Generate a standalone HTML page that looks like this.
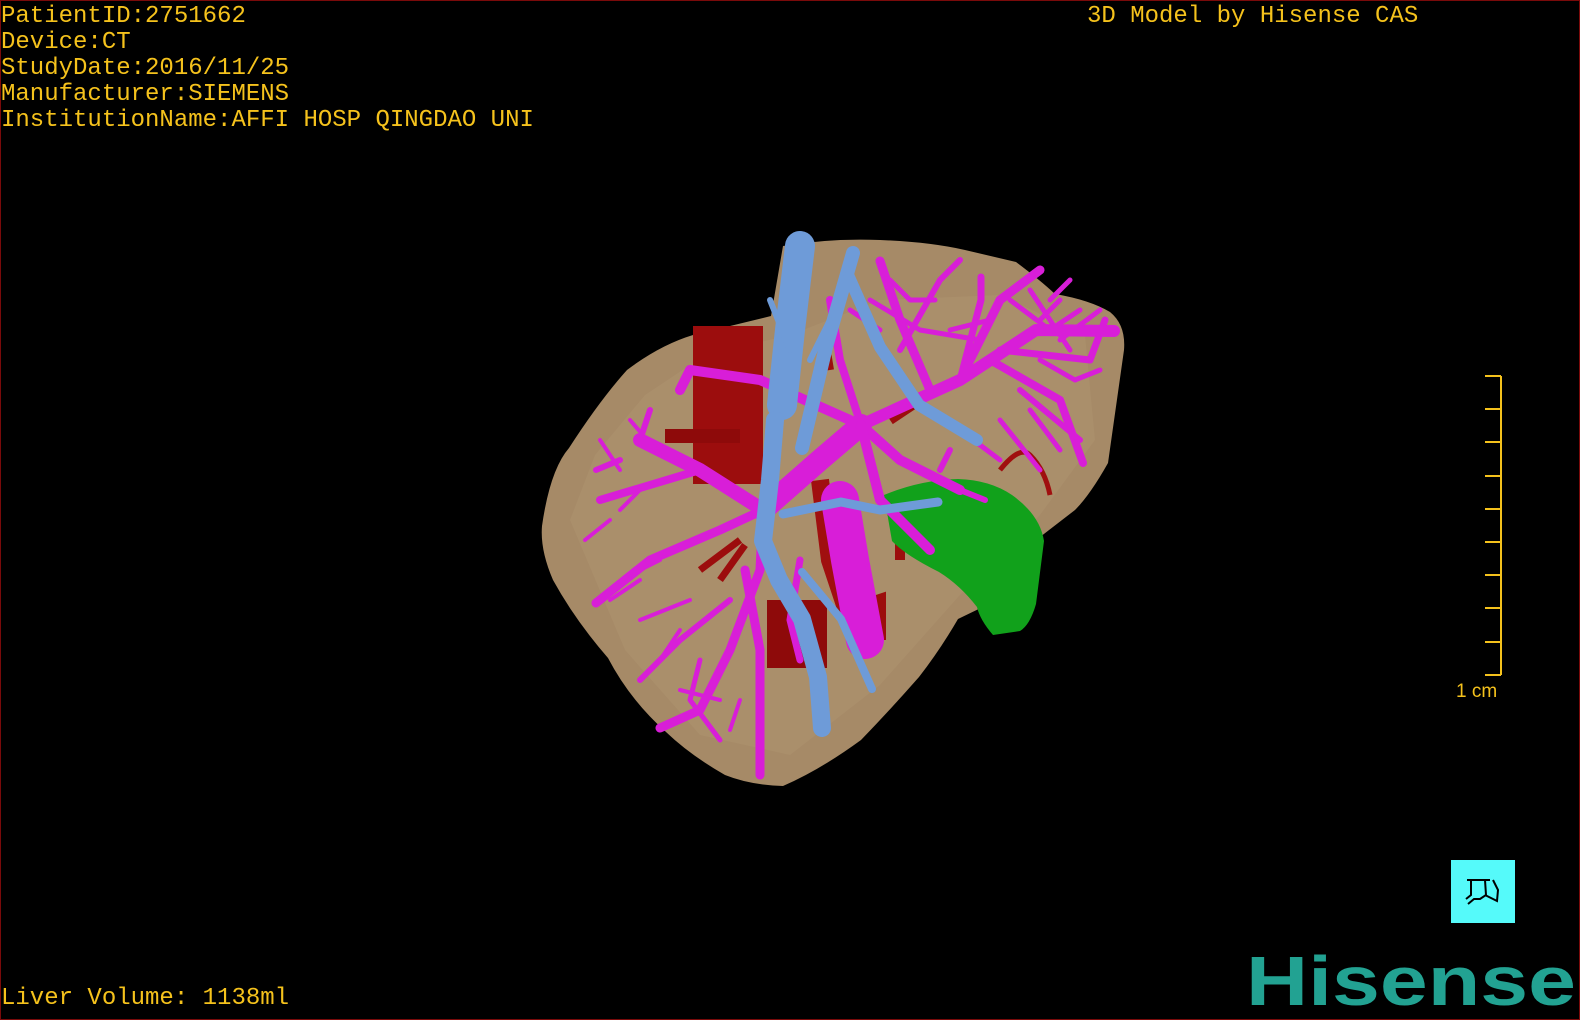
<!DOCTYPE html>
<html><head><meta charset="utf-8"><style>
html,body{margin:0;padding:0;background:#000;}
body{width:1580px;height:1020px;position:relative;overflow:hidden;}
.frame{position:absolute;left:0;top:0;width:1578px;height:1018px;border:1px solid #7a0a0a;}
.t{position:absolute;font-family:"Liberation Mono",monospace;font-size:24px;color:#f5c21c;white-space:pre;line-height:26px;}
</style></head><body>
<div class="frame"></div>
<div class="t" style="left:1px;top:4px;">PatientID:2751662
Device:CT
StudyDate:2016/11/25
Manufacturer:SIEMENS
InstitutionName:AFFI HOSP QINGDAO UNI</div>
<div class="t" style="left:1087px;top:4px;">3D Model by Hisense CAS</div>
<div class="t" style="left:1px;top:986px;">Liver Volume: 1138ml</div>

<svg width="1580" height="1020" style="position:absolute;left:0;top:0">
<!-- liver -->
<path d="M542,526 Q550,470 569,448 Q600,400 627,370 Q660,345 693,335 L771,316 L783,246 Q830,238 880,240 Q930,242 965,250 L1016,262 Q1040,280 1055,294 Q1090,300 1110,312 Q1126,325 1124,350 L1108,463 Q1090,495 1075,510 L1040,537 Q1010,575 989,604 L958,619 Q940,650 919,677 Q890,710 861,740 Q820,770 783,786 Q750,785 725,775 Q690,755 666,732 Q630,700 608,658 Q575,620 553,580 Q540,550 542,526 Z" fill="#a68a67"/>
<path d="M570,520 L595,455 L645,395 L705,355 L790,335 L880,300 L1000,295 L1085,335 L1095,440 L1040,515 L960,595 L880,685 L790,755 L700,735 L625,650 Z" fill="#b09470" opacity="0.45"/>
<!-- red -->
<rect x="693" y="326" width="70" height="158" fill="#9c0d0d"/>
<rect x="767" y="600" width="60" height="68" fill="#8e0a0a"/>
<path d="M665,436 L740,436" stroke="#8e0a0a" stroke-width="14"/>
<path d="M820,480 L830,560 L850,620" stroke="#a00f0f" stroke-width="18" fill="none"/>
<path d="M700,570 L740,540 M720,580 L745,545" stroke="#9c0d0d" stroke-width="7" fill="none"/>
<path d="M850,610 L880,600 L880,640" stroke="#9c0d0d" stroke-width="12" fill="none"/>
<path d="M890,420 L920,400 M900,540 L900,560" stroke="#9c0d0d" stroke-width="10" fill="none"/>
<path d="M1000,470 Q1020,445 1030,455 Q1045,470 1050,495" stroke="#a00f0f" stroke-width="5" fill="none"/>
<path d="M825,340 L830,370" stroke="#9c0d0d" stroke-width="8"/>
<!-- green -->
<path d="M884,495 Q920,480 958,479 Q990,480 1012,495 Q1040,515 1044,541 L1036,604 Q1030,625 1020,631 L993,635 Q980,620 977,607 Q960,585 939,572 Q905,555 892,541 Z" fill="#11a11b"/>
<!-- magenta -->
<g stroke="#d81ed8" fill="none" stroke-linecap="round" stroke-linejoin="round">
<path d="M840,500 L850,560 L865,640" stroke-width="38"/>
<path d="M763,510 L700,470 L640,440" stroke-width="14"/>
<path d="M700,470 L600,500" stroke-width="8"/>
<path d="M640,440 L650,410 M620,460 L596,470" stroke-width="6"/>
<path d="M763,510 L720,530 L650,560 L596,603" stroke-width="9"/>
<path d="M763,510 L760,570 L730,650 L700,710 L660,728" stroke-width="9"/>
<path d="M745,570 L760,650 L760,775" stroke-width="9"/>
<path d="M730,600 L680,640 L640,680" stroke-width="6"/>
<path d="M700,660 L690,700 L720,740" stroke-width="5"/>
<path d="M763,510 L820,460 L861,425" stroke-width="22"/>
<path d="M861,425 L760,380 L690,370 L680,390" stroke-width="10"/>
<path d="M861,425 L960,380 L1036,330 L1114,331" stroke-width="12"/>
<path d="M960,380 L1000,300 L1040,270" stroke-width="9"/>
<path d="M930,390 L900,320 L880,261" stroke-width="9"/>
<path d="M960,380 L981,300 L981,277" stroke-width="7"/>
<path d="M990,360 L1060,400 L1083,463" stroke-width="8"/>
<path d="M1000,350 L1090,360 L1105,320" stroke-width="7"/>
<path d="M1020,390 L1080,440" stroke-width="6"/>
<path d="M900,350 L940,280 L960,260" stroke-width="6"/>
<path d="M1040,320 L1060,300 M1060,340 L1100,310" stroke-width="5"/>
<path d="M861,425 L900,460 L960,490" stroke-width="10"/>
<path d="M960,490 L985,500 M940,470 L950,450" stroke-width="6"/>
<path d="M861,425 L840,360 L830,300" stroke-width="8"/>
<path d="M861,425 L880,500 L930,550" stroke-width="10"/>
<path d="M800,560 L790,620 L800,660" stroke-width="7"/>
<path d="M870,300 L920,330 L980,340 M1030,290 L1070,350" stroke-width="5"/>
<path d="M620,510 L640,490 M660,560 L630,575 M690,600 L640,620 M720,700 L680,690" stroke-width="4"/>
<path d="M1010,300 L1050,330 L1080,310 M1040,360 L1075,380 L1100,370 M1030,410 L1060,450 M1050,300 L1070,280" stroke-width="5"/>
<path d="M890,280 L910,300 L935,300 M950,330 L990,320 M880,330 L850,310" stroke-width="5"/>
<path d="M620,470 L600,440 M660,455 L630,420 M610,520 L585,540 M640,580 L610,600 M680,630 L660,660 M740,700 L730,730" stroke-width="4"/>
<path d="M1000,420 L1040,470 M960,430 L1000,460" stroke-width="5"/>
</g>
<!-- blue -->
<g stroke="#6e9bd8" fill="none" stroke-linecap="round" stroke-linejoin="round">
<path d="M800,246 L790,330 L782,405" stroke-width="30"/>
<path d="M853,253 L826,347 L802,448" stroke-width="14"/>
<path d="M849,277 L880,347 L919,405 L977,440" stroke-width="12"/>
<path d="M775,420 L770,480 L763,541 L779,580 L802,619 L818,677 L822,728" stroke-width="18"/>
<path d="M783,514 L841,502 L880,510 L938,502" stroke-width="9"/>
<path d="M802,572 L841,619 L872,689" stroke-width="8"/>
<path d="M830,320 L810,360 M790,350 L770,300" stroke-width="6"/>
</g>
<!-- scale bar -->
<g stroke="#f5c21c" stroke-width="2">
<line x1="1501" y1="376" x2="1501" y2="675"/>
<line x1="1485" y1="376" x2="1501" y2="376"/><line x1="1485" y1="409" x2="1501" y2="409"/>
<line x1="1485" y1="442" x2="1501" y2="442"/><line x1="1485" y1="476" x2="1501" y2="476"/>
<line x1="1485" y1="509" x2="1501" y2="509"/><line x1="1485" y1="542" x2="1501" y2="542"/>
<line x1="1485" y1="575" x2="1501" y2="575"/><line x1="1485" y1="608" x2="1501" y2="608"/>
<line x1="1485" y1="642" x2="1501" y2="642"/><line x1="1485" y1="675" x2="1501" y2="675"/>
</g>
<text x="1456" y="697" font-family="Liberation Sans, sans-serif" font-size="19" fill="#f5c21c">1 cm</text>
<!-- button -->
<rect x="1451" y="860" width="64" height="63" fill="#55fafa"/>
<path d="M1467,880 L1490,880 M1471,880 L1471,895 L1466,899 M1485,880 L1486,895 L1480,899 L1474,899 L1468,904" stroke="#000" stroke-width="2" fill="none"/>
<path d="M1485,895 L1497,901 L1498,890 L1493,880" stroke="#000" stroke-width="2" fill="none"/>
<!-- logo -->
<text x="1246" y="1005" font-family="Liberation Sans, sans-serif" font-weight="bold" font-size="70" fill="#22a292" textLength="330" lengthAdjust="spacingAndGlyphs">Hisense</text>
</svg>
</body></html>
